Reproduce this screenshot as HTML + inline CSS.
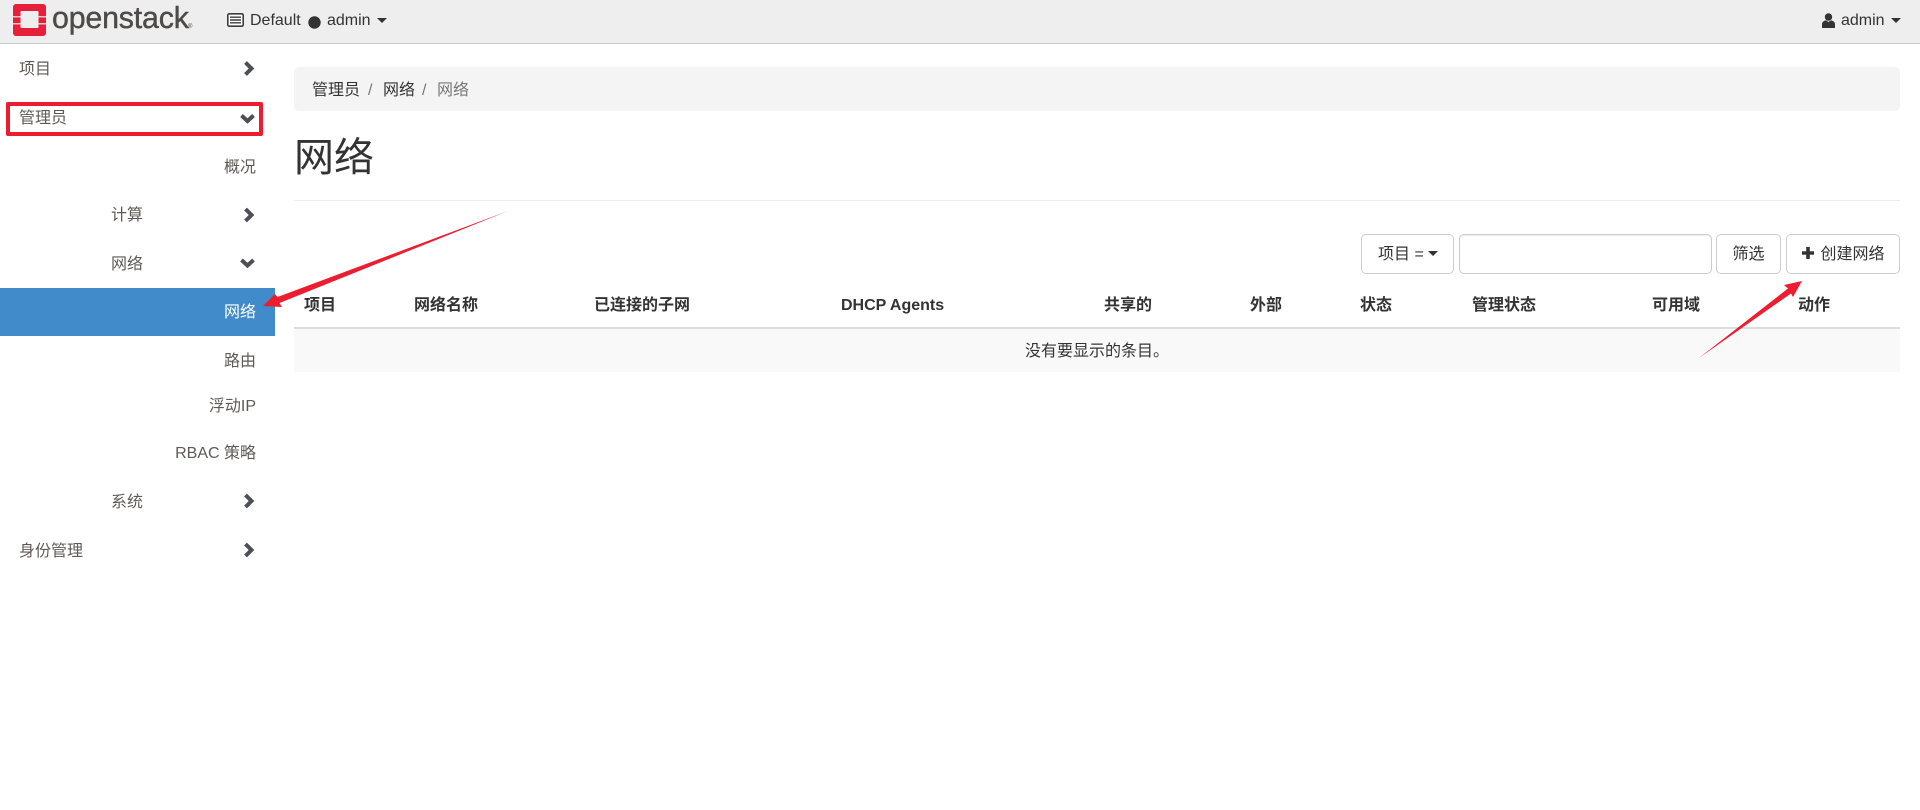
<!DOCTYPE html>
<html lang="zh-CN"><head><meta charset="utf-8"><title>网络</title>
<style>
*{box-sizing:border-box}
html,body{margin:0;padding:0;background:#fff}
body{width:1920px;height:810px;position:relative;overflow:hidden;font:16px/22px "Liberation Sans","Noto Sans CJK SC",sans-serif;color:#333}
.a{position:absolute;white-space:nowrap}
#nav{left:0;top:0;width:1920px;height:44px;background:#eee;border-bottom:1px solid #ccc}
.s{color:#5f5a55;line-height:22px}
.r{right:1664px;text-align:right}
.bar{position:absolute;left:294px;top:67px;width:1606px;height:44px;background:#f4f4f4;border-radius:5px}
.btn{position:absolute;top:234px;height:40px;border:1px solid #ccc;border-radius:5px;background:#fff;line-height:40px;text-align:center;color:#333;white-space:nowrap}
.th{position:absolute;top:295px;font-weight:bold;color:#333;white-space:nowrap;line-height:22px}
svg{position:absolute;overflow:visible}
</style></head><body>
<div class="a" id="nav"></div>

<svg style="left:13px;top:4px" width="33" height="32" viewBox="0 0 33 32">
<rect width="33" height="32" rx="3" fill="#e6203a"/>
<rect x="7.500" y="7" width="18" height="17" rx="1" fill="#eee"/>
<path fill="#f3c0c6" d="M0 12H7.500V13.500H0ZM0 19H7.500V20.500H0ZM25.500 12H33V13.500H25.500ZM25.500 19H33V20.500H25.500Z"/>
</svg>
<div class="a" style="left:52px;top:2px;font-size:31px;line-height:32px;color:#4d4a47;transform-origin:0 0;transform:scaleX(.98);letter-spacing:-.2px;-webkit-text-stroke:.4px #4d4a47">openstack</div>
<div class="a" style="left:188px;top:24px;font-size:6px;line-height:6px;color:#4d4a47">®</div>

<svg style="left:227px;top:13px" width="17" height="15" viewBox="0 0 17 15"><rect x=".8" y=".8" width="15.400" height="12.400" rx="1.500" fill="#fff" stroke="#3d3d3d" stroke-width="1.600"/><path d="M3 4.200H14M3 7H14M3 9.800H14" stroke="#3d3d3d" stroke-width="1.400"/></svg>
<div class="a" style="left:250px;top:10px;color:#333">Default</div>
<svg style="left:308px;top:16px" width="13" height="13"><circle cx="6.500" cy="6.500" r="6.200" fill="#333"/></svg>
<div class="a" style="left:327px;top:10px;color:#333">admin</div>
<svg style="left:377px;top:18px" width="10" height="5"><path d="M0 0H10L5 5Z" fill="#333"/></svg>

<svg style="left:1822px;top:13px" width="13" height="15" viewBox="0 0 13 15"><circle cx="6.500" cy="4" r="3.700" fill="#333"/><path d="M0 15V11.500C0 9 2 7.600 4 7.400L6.500 9L9 7.400C11 7.600 13 9 13 11.500V15Z" fill="#333"/></svg>
<div class="a" style="left:1841px;top:10px;color:#333">admin</div>
<svg style="left:1891px;top:18px" width="10" height="5"><path d="M0 0H10L5 5Z" fill="#333"/></svg>

<div class="a s" style="left:19px;top:59px">项目</div>
<div class="a s" style="left:19px;top:108px">管理员</div>
<div class="a s r" style="top:157px">概况</div>
<div class="a s" style="left:111px;top:205px">计算</div>
<div class="a s" style="left:111px;top:254px">网络</div>
<div class="a" style="left:0;top:288px;width:275px;height:48px;background:#428bca"></div>
<div class="a r" style="top:302px;color:#fff">网络</div>
<div class="a s r" style="top:351px">路由</div>
<div class="a s r" style="top:396px">浮动IP</div>
<div class="a s r" style="top:443px">RBAC 策略</div>
<div class="a s" style="left:111px;top:492px">系统</div>
<div class="a s" style="left:19px;top:541px">身份管理</div>

<svg style="left:0;top:0" width="280" height="570" fill="none" stroke="#4d4f55" stroke-width="4">
<path d="M245.500 62.500L251.500 68.500L245.500 74.500"/>
<path d="M241.500 115.500L247.500 121L253.500 115.500"/>
<path d="M245.500 209L251.500 215L245.500 221"/>
<path d="M241.500 260L247.500 265.500L253.500 260"/>
<path d="M245.500 495L251.500 501L245.500 507"/>
<path d="M245.500 544L251.500 550L245.500 556"/>
</svg>
<div class="a" style="left:6px;top:102px;width:257px;height:34px;border:4px solid #ed1c2e;border-radius:2px"></div>

<div class="bar"></div>
<div class="a" style="left:312px;top:80px;color:#333">管理员</div>
<div class="a" style="left:368px;top:80px;color:#777">/</div>
<div class="a" style="left:383px;top:80px;color:#333">网络</div>
<div class="a" style="left:422px;top:80px;color:#777">/</div>
<div class="a" style="left:437px;top:80px;color:#777">网络</div>
<div class="a" style="left:294px;top:132px;font-size:40px;line-height:52px;color:#333">网络</div>
<div class="a" style="left:294px;top:200px;width:1606px;height:1px;background:#eee"></div>

<div class="btn" style="left:1361px;width:93px;padding-right:2px;text-align:left;padding-left:16px">项目 =</div>
<svg style="left:1428px;top:251px" width="10" height="5"><path d="M0 0H10L5 5Z" fill="#333"/></svg>
<div class="a" style="left:1459px;top:234px;width:253px;height:40px;border:1px solid #ccc;border-radius:5px;box-shadow:inset 0 1px 1px rgba(0,0,0,.075)"></div>
<div class="btn" style="left:1716px;width:65px">筛选</div>
<div class="btn" style="left:1786px;width:114px;padding-left:19px">创建网络</div>
<svg style="left:1802px;top:247px" width="12" height="12"><path d="M4.200 0H7.800V4.200H12V7.800H7.800V12H4.200V7.800H0V4.200H4.200Z" fill="#333"/></svg>

<div class="th" style="left:304px">项目</div>
<div class="th" style="left:414px">网络名称</div>
<div class="th" style="left:594px">已连接的子网</div>
<div class="th" style="left:841px">DHCP Agents</div>
<div class="th" style="left:1104px">共享的</div>
<div class="th" style="left:1250px">外部</div>
<div class="th" style="left:1360px">状态</div>
<div class="th" style="left:1472px">管理状态</div>
<div class="th" style="left:1652px">可用域</div>
<div class="th" style="left:1798px">动作</div>
<div class="a" style="left:294px;top:327px;width:1606px;height:2px;background:#ddd"></div>
<div class="a" style="left:294px;top:329px;width:1606px;height:43px;background:#f9f9f9;text-align:center;line-height:45px;color:#333">没有要显示的条目。</div>

<svg style="left:0;top:0" width="1920" height="810">
<path fill="#ed1c2e" d="M263 306L275 294L277.500 297L508 211L279.500 303L282 307Z"/>
<path fill="#ed1c2e" d="M1802 281L1793 297L1791 293.500L1699 358L1788 288.500L1784 285Z"/>
</svg>
</body></html>
